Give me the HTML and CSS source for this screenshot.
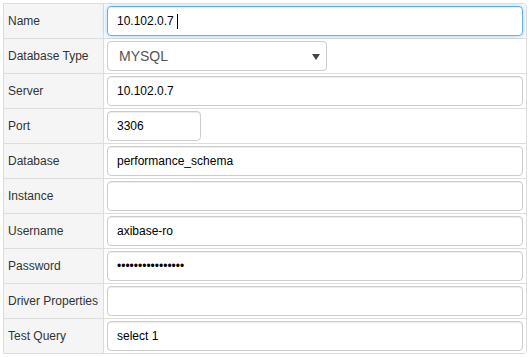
FILE: index.html
```html
<!DOCTYPE html>
<html>
<head>
<meta charset="utf-8">
<link rel="stylesheet" href="styles.css">
</head>
<body>
<div class="form">
  <div class="row">
    <div class="label">Name</div>
    <div class="cell"><div class="field focused">10.102.0.7<span class="caret"></span></div></div>
  </div>
  <div class="row">
    <div class="label">Database Type</div>
    <div class="cell"><div class="field select"><span class="sel-text">MYSQL</span><svg class="arrow" width="8" height="6" viewBox="0 0 8 6"><path d="M0 0H8L4 6Z" fill="#444"/></svg></div></div>
  </div>
  <div class="row">
    <div class="label">Server</div>
    <div class="cell"><input class="field" type="text" value="10.102.0.7"></div>
  </div>
  <div class="row">
    <div class="label">Port</div>
    <div class="cell"><input class="field port" type="text" value="3306"></div>
  </div>
  <div class="row">
    <div class="label">Database</div>
    <div class="cell"><input class="field" type="text" value="performance_schema"></div>
  </div>
  <div class="row">
    <div class="label">Instance</div>
    <div class="cell"><input class="field" type="text" value=""></div>
  </div>
  <div class="row">
    <div class="label">Username</div>
    <div class="cell"><input class="field" type="text" value="axibase-ro"></div>
  </div>
  <div class="row">
    <div class="label">Password</div>
    <div class="cell"><input class="field" type="password" value="xxxxxxxxxxxxxxxx"></div>
  </div>
  <div class="row">
    <div class="label">Driver Properties</div>
    <div class="cell"><input class="field" type="text" value=""></div>
  </div>
  <div class="row">
    <div class="label">Test Query</div>
    <div class="cell"><input class="field" type="text" value="select 1"></div>
  </div>
</div>
</body>
</html>
```

FILE: styles.css
```css
* { box-sizing: border-box; }
html, body { margin: 0; padding: 0; background: #fff; }
body {
  font-family: "Liberation Sans", Arial, sans-serif;
  font-size: 12px;
  color: #333;
}
.form {
  margin: 3px 0 0 3px;
  width: 524px;
  border: 1px solid #ddd;
  border-radius: 0 4px 4px 0;
  overflow: hidden;
}
.row {
  display: grid;
  grid-template-columns: 100px 1fr;
  height: 35px;
  border-bottom: 1px solid #ddd;
}
.row:last-child { border-bottom: none; height: 34px; }
.label {
  background: #f5f5f5;
  border-right: 1px solid #ddd;
  padding-left: 4px;
  display: flex;
  align-items: center;
  color: #333;
}
.cell {
  padding: 2px 3px;
  background: #fff;
}
.field {
  display: flex;
  align-items: center;
  width: 100%;
  height: 30px;
  margin: 0;
  padding: 0 9px;
  border: 1px solid #ccc;
  border-radius: 4px;
  box-shadow: inset 0 1px 1px rgba(0,0,0,0.075);
  font-family: "Liberation Sans", Arial, sans-serif;
  font-size: 12px;
  color: #000;
  background: #fff;
  outline: none;
}
input.field { display: block; }
.focused {
  border-color: #66afe9;
  box-shadow: inset 0 1px 1px rgba(0,0,0,0.075), 0 0 6px rgba(102,175,233,0.6);
}
.caret {
  display: inline-block;
  width: 1px;
  height: 15px;
  background: #000;
  margin-left: 3px;
}
.select {
  width: 220px;
  justify-content: space-between;
  padding: 0 6px 0 11px;
  box-shadow: none;
}
.sel-text {
  font-size: 14px;
  color: #555;
}
.arrow { display: block; margin-top: 1px; }
.port { width: 94px; }
```
